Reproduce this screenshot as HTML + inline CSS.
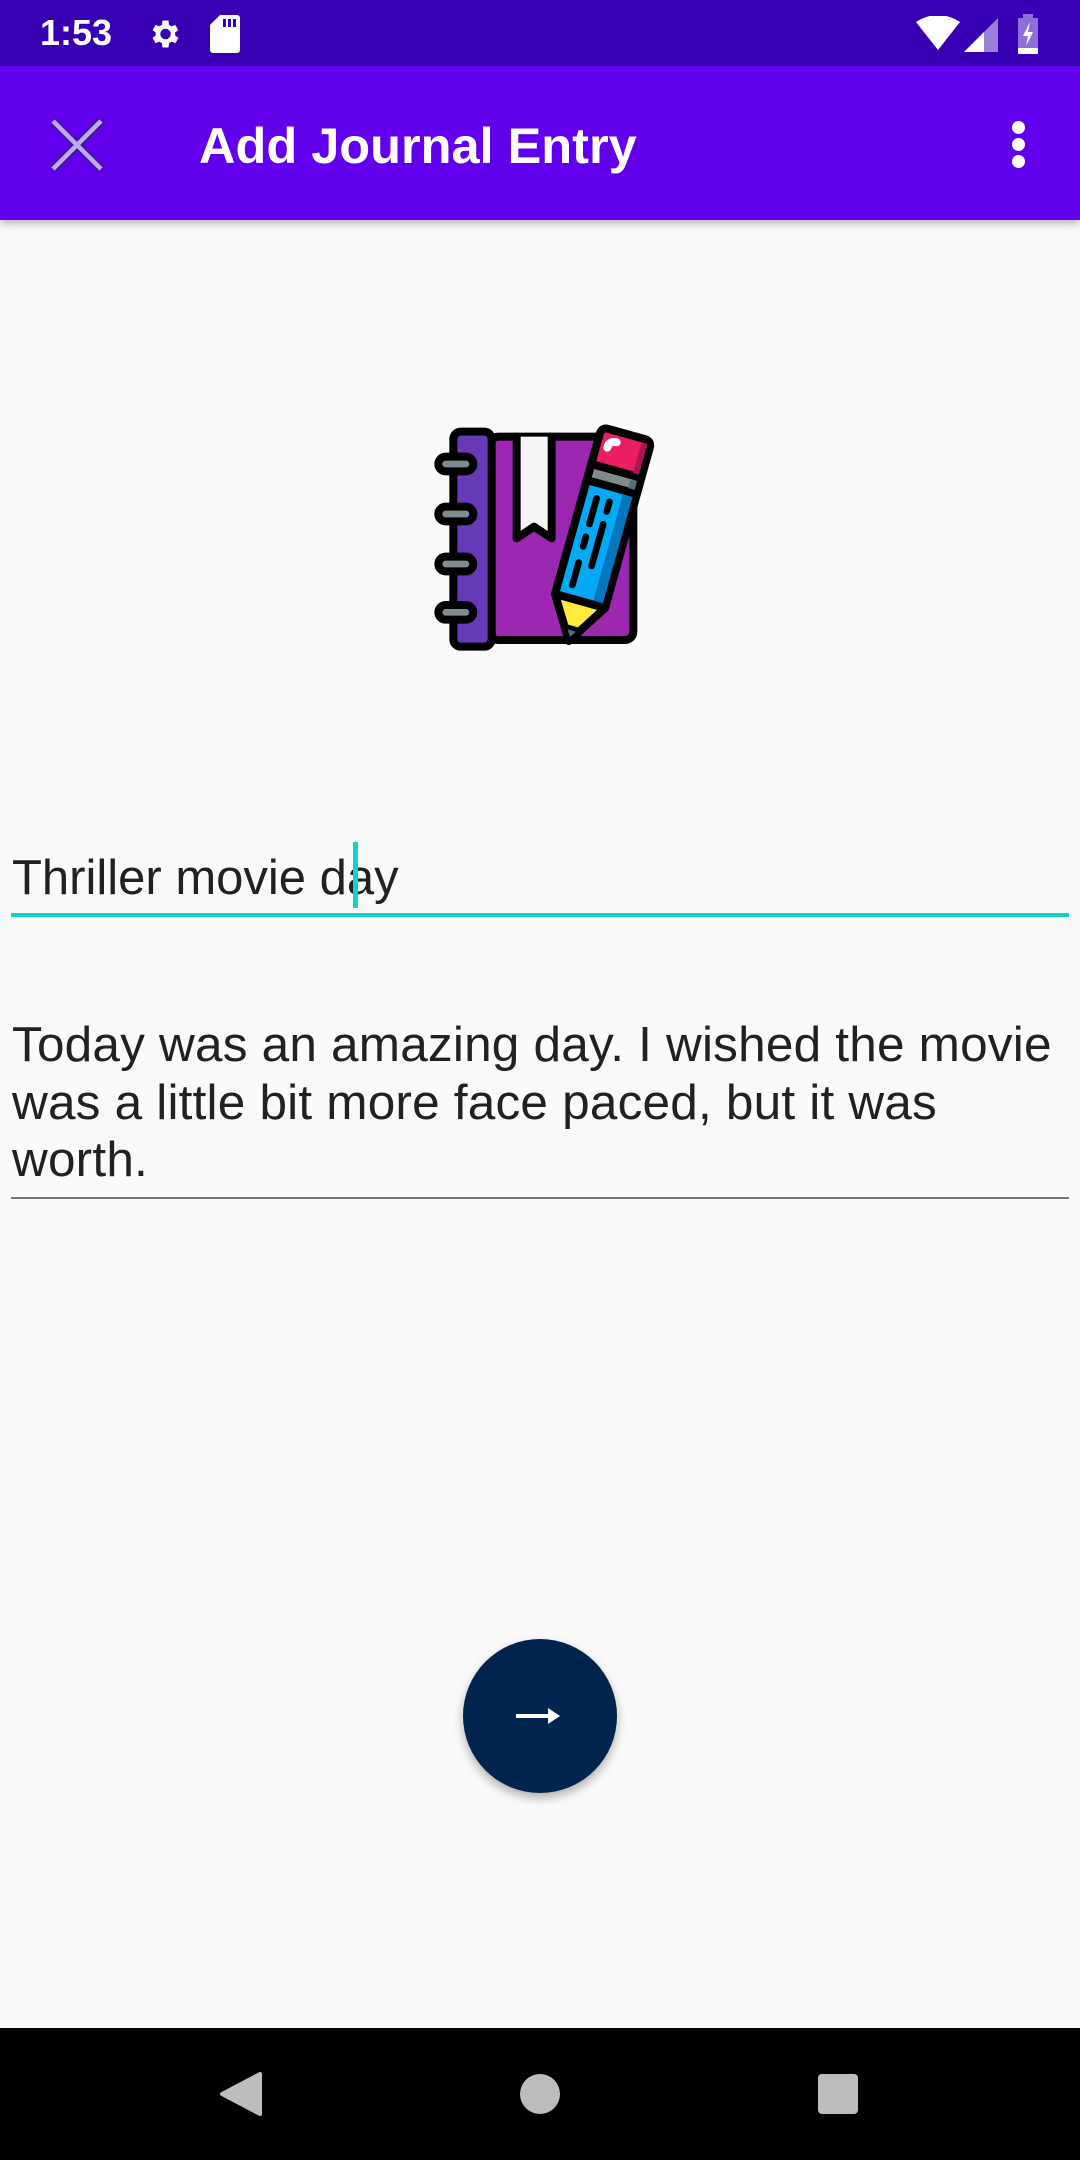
<!DOCTYPE html>
<html><head><meta charset="utf-8"><style>
*{margin:0;padding:0;box-sizing:border-box}
body{width:1080px;height:2160px;background:#fafafa;font-family:"Liberation Sans",sans-serif;position:relative;overflow:hidden}
.abs{position:absolute}
</style></head><body>
<div class="abs" style="left:0;top:0;width:1080px;height:66px;background:#3700b3"></div>
<div class="abs" style="left:40px;top:10px;color:#fff;font-size:36px;line-height:46px;font-weight:bold">1:53</div>
<svg class="abs" style="left:146px;top:16px" width="36" height="36" viewBox="0 0 24 24"><path fill="#fff" d="M19.4 13a7.5 7.5 0 000-2l2.1-1.6-2-3.5-2.5 1a7 7 0 00-1.7-1L15 3h-4l-.4 2.9a7 7 0 00-1.700 1l-2.5-1-2 3.5L6.5 11a7.5 7.5 0 000 2l-2.1 1.6 2 3.5 2.5-1a7 7 0 001.7 1L11 21h4l.4-2.9a7 7 0 001.7-1l2.5 1 2-3.5zM13 15.5a3.5 3.5 0 110-7 3.5 3.5 0 010 7z"/></svg>
<svg class="abs" style="left:210px;top:15px" width="30" height="38" viewBox="0 0 30 38"><path fill="#fff" d="M10 0h17a3 3 0 013 3v32a3 3 0 01-3 3H3a3 3 0 01-3-3V10z"/><rect x="13" y="4" width="3" height="8" fill="#3700b3"/><rect x="18" y="4" width="3" height="8" fill="#3700b3"/><rect x="23" y="4" width="3" height="8" fill="#3700b3"/></svg>
<svg class="abs" style="left:916px;top:16px" width="44" height="36" viewBox="0 0 44 36"><path fill="#fff" d="M0 6Q22-8 44 6L22 34z"/></svg>
<svg class="abs" style="left:964px;top:18px" width="34" height="34" viewBox="0 0 34 34"><path fill="#fff" opacity=".5" d="M34 0V34H0z"/><path fill="#fff" d="M20 14V34H0z"/></svg>
<svg class="abs" style="left:1016px;top:14px" width="24" height="40" viewBox="0 0 24 40"><rect x="7" y="0" width="10" height="4" fill="#8c6fd9"/><rect x="2" y="4" width="20" height="36" fill="#8c6fd9"/><rect x="2" y="34" width="20" height="6" fill="#fff"/><path fill="#fff" d="M14 8L7 22h5l-2 10 7-14h-5z"/></svg>

<div class="abs" style="left:0;top:66px;width:1080px;height:154px;background:#6200ee;box-shadow:0 3px 8px rgba(0,0,0,.3)"></div>
<svg class="abs" style="left:50px;top:118px" width="54" height="54" viewBox="0 0 54 54"><path stroke="#3a1a8a" stroke-width="8" d="M3 3L51 51M51 3L3 51"/><path stroke="#c3a8f0" stroke-width="4.5" d="M3 3L51 51M51 3L3 51"/></svg>
<div class="abs" style="left:199px;top:113px;color:#fff;font-size:50.5px;line-height:66px;font-weight:bold">Add Journal Entry</div>
<div class="abs" style="left:1012px;top:121px;width:13px;height:13px;border-radius:50%;background:#fff"></div>
<div class="abs" style="left:1012px;top:138px;width:13px;height:13px;border-radius:50%;background:#fff"></div>
<div class="abs" style="left:1012px;top:155px;width:13px;height:13px;border-radius:50%;background:#fff"></div>

<svg class="abs" style="left:410px;top:410px" width="260" height="250" viewBox="0 0 780 750">
<g stroke="#000" stroke-width="24" stroke-linejoin="round" stroke-linecap="round">
<rect x="240" y="80" width="430" height="610" rx="25" fill="#9c27b0"/>
<rect x="130" y="65" width="115" height="645" rx="22" fill="#673ab7"/>
<path d="M320 80V385L372 350L425 385V80" fill="#f5f5f5"/>
<rect x="85" y="140" width="105" height="44" rx="22" fill="#7f8c8d"/>
<rect x="85" y="290" width="105" height="44" rx="22" fill="#7f8c8d"/>
<rect x="85" y="440" width="105" height="44" rx="22" fill="#7f8c8d"/>
<rect x="85" y="585" width="105" height="44" rx="22" fill="#7f8c8d"/>
<g transform="translate(650,72) rotate(15.6)">
<path d="M-78 520L78 520L0 645Z" fill="#ffeb3b"/>
<path d="M-26 605L26 605L0 645Z" fill="#546e7a" stroke-width="14"/>
<rect x="-78" y="165" width="156" height="355" fill="#03a9f4"/>
<rect x="38" y="178" width="30" height="330" fill="#0277bd" stroke="none"/>
<rect x="-78" y="115" width="156" height="50" fill="#7f8c8d"/>
<rect x="48" y="127" width="20" height="28" fill="#546e7a" stroke="none"/>
<path d="M-78 115V22Q-78 0-56 0H56Q78 0 78 22V115Z" fill="#e91e63"/>
<rect x="50" y="12" width="18" height="95" fill="#ad1457" stroke="none"/>
<path d="M-35 210V290M-35 330V360M5 210V240M5 280V410M-35 410V480" fill="none" stroke-width="20"/>
<path d="M-45 55Q-45 32-22 32" fill="none" stroke="#fff" stroke-width="24"/>
</g>
</g>
</svg>

<div class="abs" style="left:12px;top:848px;font-size:49px;line-height:60px;color:#212121">Thriller movie day</div>
<div class="abs" style="left:353px;top:842px;width:5px;height:66px;background:#12d3c8"></div>
<div class="abs" style="left:11px;top:913px;width:1058px;height:4px;background:#12d3c8"></div>

<div class="abs" style="left:12px;top:1016px;font-size:49.5px;line-height:57.5px;color:#212121;white-space:nowrap;letter-spacing:.2px">Today was an amazing day. I wished the movie<br>was a little bit more face paced, but it was<br>worth.</div>
<div class="abs" style="left:11px;top:1197px;width:1058px;height:2px;background:#777"></div>

<div class="abs" style="left:463px;top:1639px;width:154px;height:154px;border-radius:50%;background:#00264f;box-shadow:0 5px 10px rgba(0,0,0,.3)"></div>
<svg class="abs" style="left:516px;top:1704px" width="48" height="24" viewBox="0 0 48 24"><path d="M0 12H40" stroke="#fff" stroke-width="4"/><path d="M32 4L44 12L32 20z" fill="#fff"/></svg>

<div class="abs" style="left:0;top:2028px;width:1080px;height:132px;background:#000"></div>
<svg class="abs" style="left:218px;top:2072px" width="44" height="44" viewBox="0 0 44 44"><path d="M42 2V42L4 22z" fill="#bdbdbd" stroke="#bdbdbd" stroke-width="4" stroke-linejoin="round"/></svg>
<div class="abs" style="left:520px;top:2074px;width:40px;height:40px;border-radius:50%;background:#bdbdbd"></div>
<div class="abs" style="left:818px;top:2074px;width:40px;height:40px;border-radius:4px;background:#bdbdbd"></div>
</body></html>
